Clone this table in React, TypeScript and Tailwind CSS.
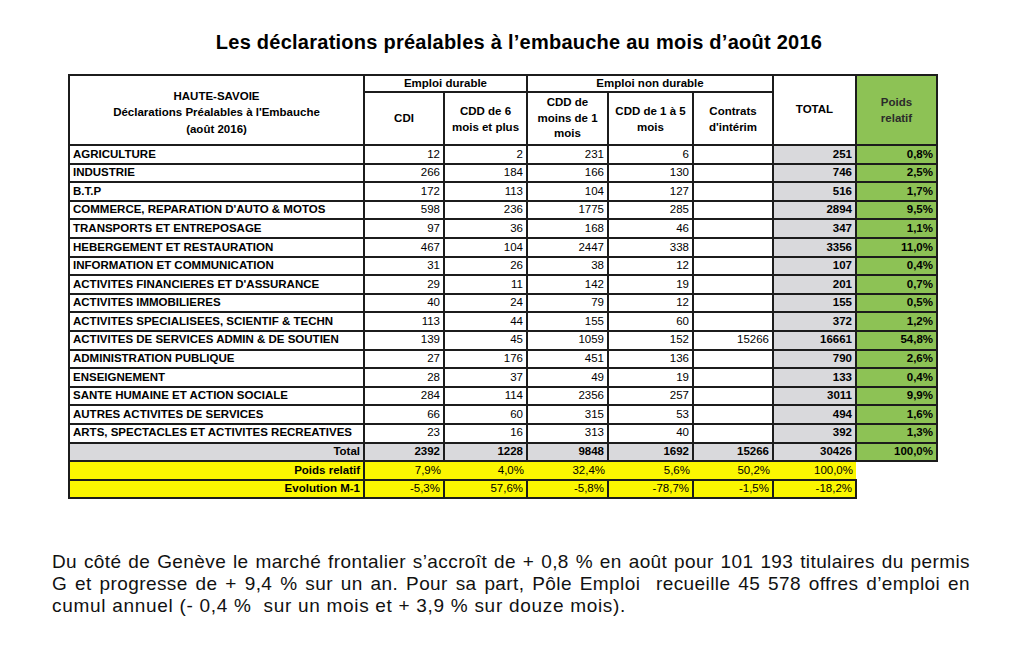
const rows: [string, string, string, string, string, string, string, string][] = [
  ["AGRICULTURE", "12", "2", "231", "6", "", "251", "0,8%"],
  ["INDUSTRIE", "266", "184", "166", "130", "", "746", "2,5%"],
  ["B.T.P", "172", "113", "104", "127", "", "516", "1,7%"],
  ["COMMERCE, REPARATION D'AUTO & MOTOS", "598", "236", "1775", "285", "", "2894", "9,5%"],
  ["TRANSPORTS ET ENTREPOSAGE", "97", "36", "168", "46", "", "347", "1,1%"],
  ["HEBERGEMENT ET RESTAURATION", "467", "104", "2447", "338", "", "3356", "11,0%"],
  ["INFORMATION ET COMMUNICATION", "31", "26", "38", "12", "", "107", "0,4%"],
  ["ACTIVITES FINANCIERES ET D'ASSURANCE", "29", "11", "142", "19", "", "201", "0,7%"],
  ["ACTIVITES IMMOBILIERES", "40", "24", "79", "12", "", "155", "0,5%"],
  ["ACTIVITES SPECIALISEES, SCIENTIF & TECHN", "113", "44", "155", "60", "", "372", "1,2%"],
  ["ACTIVITES DE SERVICES ADMIN & DE SOUTIEN", "139", "45", "1059", "152", "15266", "16661", "54,8%"],
  ["ADMINISTRATION PUBLIQUE", "27", "176", "451", "136", "", "790", "2,6%"],
  ["ENSEIGNEMENT", "28", "37", "49", "19", "", "133", "0,4%"],
  ["SANTE HUMAINE ET ACTION SOCIALE", "284", "114", "2356", "257", "", "3011", "9,9%"],
  ["AUTRES ACTIVITES DE SERVICES", "66", "60", "315", "53", "", "494", "1,6%"],
  ["ARTS, SPECTACLES ET ACTIVITES RECREATIVES", "23", "16", "313", "40", "", "392", "1,3%"],
];

const cell = "border-2 border-[#1c1c1c] px-[3px] h-[18.6px] leading-none";
const num = `${cell} text-right`;
const bare = "h-[18.6px] px-[3px] text-right leading-none border-y-2 border-[#1c1c1c]";
const hd = "border-2 border-[#1c1c1c] font-bold";
const gray = "bg-[#d9d9dc]";
const green = "bg-[#8dc255]";
const yellow = "bg-[#fbf600]";

export default function App() {
  return (
    <div className="w-[1024px] h-[662px] bg-white text-black font-['Liberation_Sans',Arial,sans-serif] overflow-hidden">
      <h1 className="pt-[29px] pl-[14px] text-center text-[20px] font-bold leading-[26px] tracking-[0.25px]">
        Les déclarations préalables à l’embauche au mois d’août 2016
      </h1>

      <div className="pl-[68px] pt-[19px]">
        <table className="border-collapse text-[11.5px] table-fixed">
          <colgroup>
            <col className="w-[295px]" />
            <col className="w-[80px]" />
            <col className="w-[83px]" />
            <col className="w-[81px]" />
            <col className="w-[85px]" />
            <col className="w-[80px]" />
            <col className="w-[83px]" />
            <col className="w-[81px]" />
          </colgroup>
          <thead>
            <tr className="h-[17px]">
              <th rowSpan={2} className={`${hd} leading-[16.5px] pt-[5px]`}>
                HAUTE-SAVOIE
                <br />
                Déclarations Préalables à l'Embauche
                <br />
                (août 2016)
              </th>
              <th colSpan={2} className={`${hd} leading-none`}>Emploi durable</th>
              <th colSpan={3} className={`${hd} leading-none`}>Emploi non durable</th>
              <th rowSpan={2} className={hd}>TOTAL</th>
              <th rowSpan={2} className={`${hd} text-[#2b2b2b] leading-[16px] ${green}`}>
                Poids
                <br />
                relatif
              </th>
            </tr>
            <tr className="h-[53px]">
              <th className={hd}>CDI</th>
              <th className={`${hd} leading-[16px]`}>
                CDD de 6
                <br />
                mois et plus
              </th>
              <th className={`${hd} leading-[15.5px]`}>
                CDD de
                <br />
                moins de 1
                <br />
                mois
              </th>
              <th className={`${hd} leading-[16px]`}>
                CDD de 1 à 5
                <br />
                mois
              </th>
              <th className={`${hd} leading-[16px]`}>
                Contrats
                <br />
                d'intérim
              </th>
            </tr>
          </thead>
          <tbody>
            {rows.map((r) => (
              <tr key={r[0]}>
                <td className={`${cell} font-bold whitespace-nowrap`}>{r[0]}</td>
                <td className={num}>{r[1]}</td>
                <td className={num}>{r[2]}</td>
                <td className={num}>{r[3]}</td>
                <td className={num}>{r[4]}</td>
                <td className={num}>{r[5]}</td>
                <td className={`${num} font-bold ${gray}`}>{r[6]}</td>
                <td className={`${num} font-bold ${green}`}>{r[7]}</td>
              </tr>
            ))}
            <tr className={`font-bold ${gray}`}>
              <td className={num}>Total</td>
              <td className={num}>2392</td>
              <td className={num}>1228</td>
              <td className={num}>9848</td>
              <td className={num}>1692</td>
              <td className={num}>15266</td>
              <td className={num}>30426</td>
              <td className={`${num} ${green}`}>100,0%</td>
            </tr>
            <tr className={yellow}>
              <td className={`${num} font-bold`}>Poids relatif</td>
              <td className={bare}>7,9%</td>
              <td className={bare}>4,0%</td>
              <td className={bare}>32,4%</td>
              <td className={bare}>5,6%</td>
              <td className={bare}>50,2%</td>
              <td className={bare}>100,0%</td>
              <td className="bg-white border-t-2 border-[#1c1c1c]"></td>
            </tr>
            <tr>
              <td className={`${num} font-bold ${yellow}`}>Evolution M-1</td>
              <td className={`${num} ${yellow}`}>-5,3%</td>
              <td className={`${num} ${yellow}`}>57,6%</td>
              <td className={`${num} ${yellow}`}>-5,8%</td>
              <td className={`${num} ${yellow}`}>-78,7%</td>
              <td className={`${num} ${yellow}`}>-1,5%</td>
              <td className={`${num} ${yellow}`}>-18,2%</td>
              <td className="bg-white"></td>
            </tr>
          </tbody>
        </table>
      </div>

      <div className="ml-[52px] mt-[52px] w-[918px] text-[19px] leading-[22px] text-[#111]">
        <p className="whitespace-nowrap tracking-[0.4px] text-justify [text-align-last:justify]">
          Du côté de Genève le marché frontalier s’accroît de + 0,8 % en août pour 101 193 titulaires du permis
        </p>
        <p className="whitespace-nowrap tracking-[0.4px] text-justify [text-align-last:justify]">
          G et progresse de + 9,4 % sur un an. Pour sa part, Pôle Emploi&nbsp; recueille 45 578 offres d’emploi en
        </p>
        <p className="whitespace-nowrap tracking-[0.7px]">
          cumul annuel (- 0,4 %&nbsp; sur un mois et + 3,9 % sur douze mois).
        </p>
      </div>
    </div>
  );
}
